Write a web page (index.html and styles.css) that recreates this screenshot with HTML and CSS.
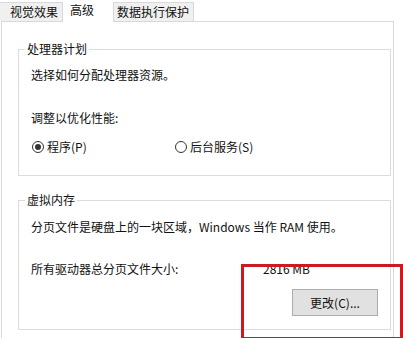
FILE: index.html
```html
<!DOCTYPE html>
<html lang="zh-CN">
<head>
    <meta charset="UTF-8">
    <title>性能选项</title>
    <link rel="stylesheet" href="styles.css">
</head>
<body>
    <div class="tabs">
        <div class="tab tab-visual">视觉效果</div>
        <div class="tab tab-advanced active">高级</div>
        <div class="tab tab-dep">数据执行保护</div>
    </div>
    <div class="panel">
        <fieldset class="group group-cpu">
            <legend>处理器计划</legend>
            <p class="line">选择如何分配处理器资源。</p>
            <p class="line opt-label">调整以优化性能:</p>
            <div class="radios">
                <label class="radio-item first"><span class="radio checked"></span>程序(P)</label>
                <label class="radio-item"><span class="radio"></span>后台服务(S)</label>
            </div>
        </fieldset>
        <fieldset class="group group-mem">
            <legend>虚拟内存</legend>
            <p class="line">分页文件是硬盘上的一块区域，Windows 当作 RAM 使用。</p>
            <div class="size-row">
                <span class="size-label">所有驱动器总分页文件大小:</span>
                <span class="size-value">2816 MB</span>
            </div>
            <div class="btn-row">
                <button class="btn">更改(C)...</button>
            </div>
        </fieldset>
    </div>
    <div class="highlight"></div>
</body>
</html>
```

FILE: styles.css
```css
body {
    margin: 0;
    width: 403px;
    height: 338px;
    overflow: hidden;
    position: relative;
    background: #ffffff;
    font-family: "Noto Sans CJK SC", "Noto Sans", sans-serif;
    font-size: 12px;
    line-height: 16px;
    color: #111111;
}

/* Tab strip */
.tabs {
    display: flex;
    align-items: flex-end;
    height: 21px;
}
.tab {
    box-sizing: border-box;
    height: 19px;
    line-height: 18px;
    background: #f0f0f0;
    border: 1px solid #d9d9d9;
    border-bottom: none;
    white-space: nowrap;
}
.tab-visual {
    margin-left: -1px;
    width: 64px;
    padding-left: 10px;
}
.tab-advanced {
    width: 50px;
    padding-left: 7px;
}
.tab-dep {
    width: 81px;
    padding-left: 3px;
}
.tab.active {
    position: relative;
    height: 22px;
    margin-bottom: -1px;
    line-height: 20px;
    background: #ffffff;
    border: none;
}

/* Panel */
.panel {
    box-sizing: border-box;
    margin-left: 1px;
    width: 393px;
    height: 330px;
    border: 1px solid #d9d9d9;
    padding: 19px 0 0 16px;
}

/* Group boxes */
.group {
    box-sizing: border-box;
    width: 373px;
    margin: 0;
    border: 1px solid #dcdcdc;
    padding: 10px 12px 20px 12px;
}
.group legend {
    margin-left: -6px;
    padding: 0 2px;
    line-height: 16px;
}
.group-mem {
    margin-top: 16px;
    padding-top: 11px;
    padding-bottom: 13px;
}
.line {
    margin: 0;
    white-space: nowrap;
}
.opt-label {
    margin-top: 27px;
}

/* Radio buttons */
.radios {
    display: flex;
    margin-top: 13px;
    height: 16px;
}
.radio-item {
    display: flex;
    align-items: center;
    gap: 3px;
}
.radio-item.first {
    width: 143px;
    padding-left: 1px;
}
.radio {
    box-sizing: border-box;
    width: 12px;
    height: 12px;
    border: 1px solid #333333;
    border-radius: 50%;
    display: flex;
    align-items: center;
    justify-content: center;
}
.radio.checked::after {
    content: "";
    width: 6px;
    height: 6px;
    border-radius: 50%;
    background: #333333;
}

/* Page file size */
.size-row {
    display: flex;
    margin-top: 26px;
}
.size-label {
    width: 232px;
}
.btn-row {
    display: flex;
    justify-content: flex-end;
    margin-top: 12px;
}
.btn {
    box-sizing: border-box;
    width: 86px;
    height: 27px;
    margin: 0;
    padding: 0;
    background: #e1e1e1;
    border: 1px solid #adadad;
    font-family: inherit;
    font-size: 12px;
    color: #111111;
}

/* Red annotation box */
.highlight {
    position: absolute;
    left: 241px;
    top: 264px;
    width: 162px;
    height: 76px;
    box-sizing: border-box;
    border: 3px solid #cc1a20;
}
```
